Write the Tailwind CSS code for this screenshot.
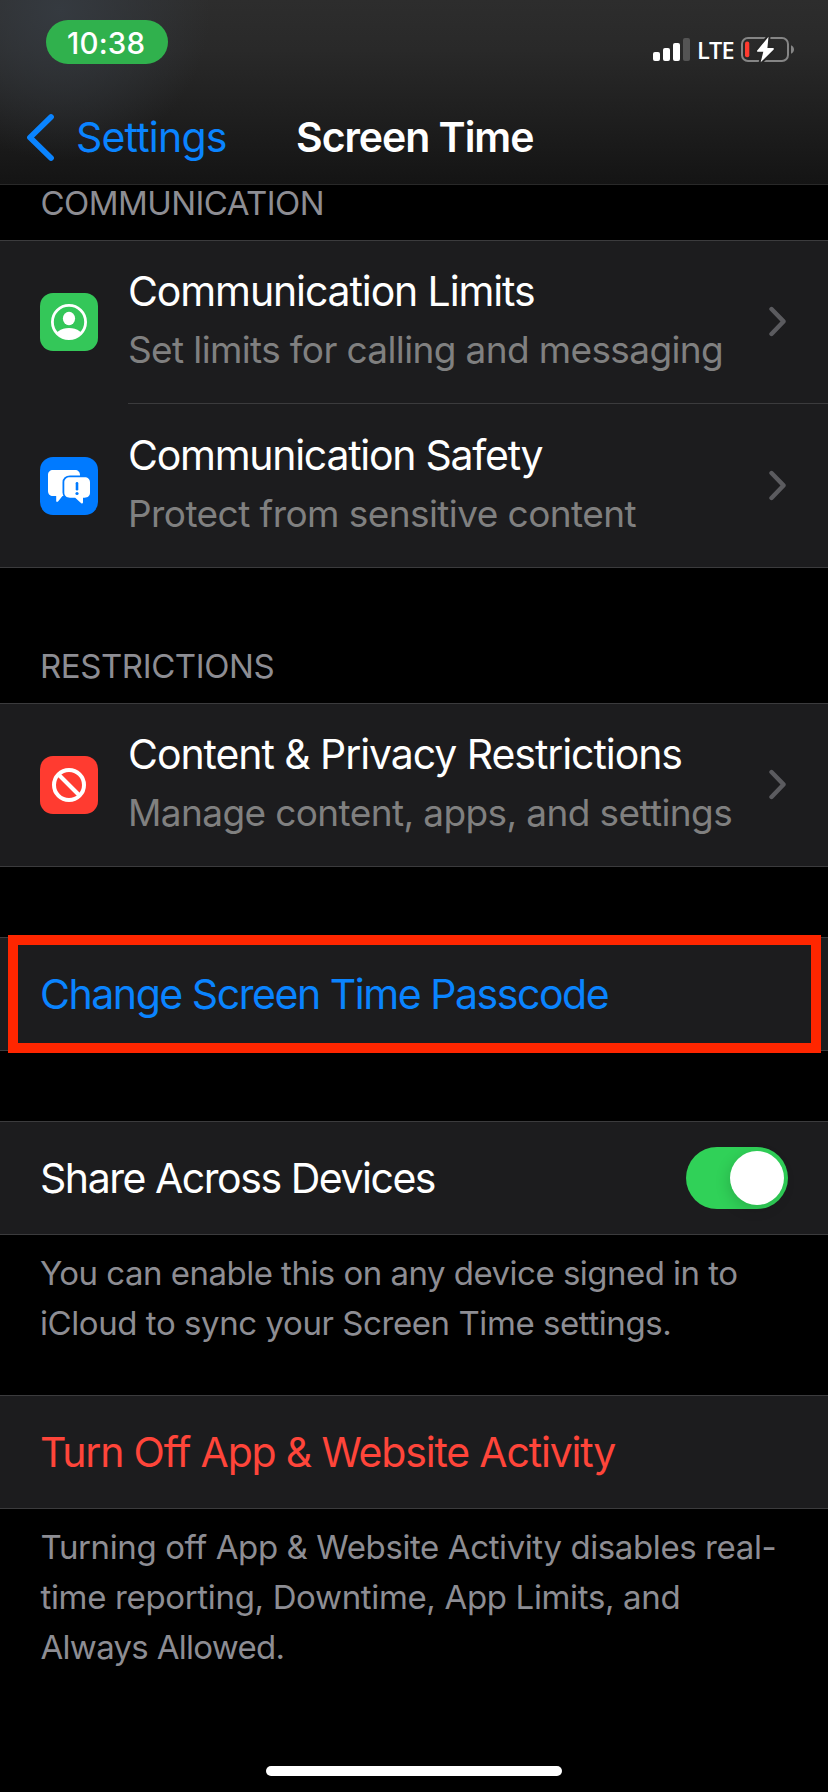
<!DOCTYPE html>
<html lang="en">
<head>
<meta charset="utf-8">
<title>Screen Time</title>
<script src="https://cdn.jsdelivr.net/npm/@tailwindcss/browser@4"></script>
</head>
<body class="bg-black">
<div class="relative flex h-[1792px] w-[828px] flex-col overflow-hidden bg-black font-['Inter',sans-serif] text-white whitespace-nowrap">

  <!-- Status bar and navigation bar -->
  <header class="h-[185px] shrink-0 border-b border-[#292929] bg-[radial-gradient(circle_at_60px_10px,#353a40_0px,#353a4000_150px),linear-gradient(to_bottom,#2d2d2d_0px,#292929_50px,#141414_184px)]">
    <div class="flex h-[84px] justify-between pt-5 pr-[34px] pl-[46px]">
      <div class="flex h-11 w-[122px] items-center rounded-full bg-[#30b14d] pl-[21px] text-[29.500px] leading-[44px] font-medium tracking-[0.2px]"><span class="mt-px">10:38</span></div>
      <div class="flex items-start pt-4">
        <svg class="mt-0.5 h-[23px] w-[37px]" viewBox="0 0 37 23" fill="#fff">
          <rect x="0" y="14" width="7" height="9" rx="2"/>
          <rect x="10" y="10" width="7" height="13" rx="2"/>
          <rect x="20" y="5" width="7" height="18" rx="2"/>
          <rect x="30" y="0" width="7" height="23" rx="2" fill="#545454"/>
        </svg>
        <span class="ml-[7px] w-[37px] font-['Open_Sans',sans-serif] text-[23.5px] leading-[29px] font-semibold tracking-[-0.8px]">LTE</span>
        <svg class="ml-[6px] h-[28px] w-[54px]" viewBox="740 36 54 28">
          <rect x="742" y="38" width="46" height="23" rx="6" fill="none" stroke="#858585" stroke-width="2"/>
          <path d="M791 45.2c2 .8 3 2.4 3 4.3s-1 3.500-3 4.300z" fill="#858585"/>
          <rect x="745" y="41.500" width="4.300" height="15.700" rx="2" fill="#ff3b30"/>
          <path d="M768.500 36.800 757 50.700q-.3.900.7 1h5.600l-2.600 10.600 13-12.900q.5-1-.6-1.300h-5.700z" fill="#fff" stroke="#272727" stroke-width="4" stroke-linejoin="round" paint-order="stroke"/>
        </svg>
      </div>
    </div>
    <div class="flex h-[100px] items-center pl-[26px] text-[41px] leading-[48px]">
      <svg class="mt-[5px] h-[50px] w-[30px]" viewBox="0 0 30 50" fill="none" stroke="#0a84ff" stroke-width="5.800" stroke-linecap="round" stroke-linejoin="round"><path d="M25 5 4 25.500 25 46"/></svg>
      <span class="mt-[6px] ml-5 w-[220px] tracking-[-0.8px] text-[#0a84ff]">Settings</span>
      <h1 class="mt-[6px] font-semibold tracking-[-1.03px]">Screen Time</h1>
    </div>
  </header>

  <h2 class="h-[55px] shrink-0 pt-[2px] pl-[40.500px] text-[33px] leading-8 tracking-[-0.57px] text-[#8d8d93]">COMMUNICATION</h2>

  <section class="shrink-0 border-y border-[#3b3b3d] bg-[#1c1c1e]">
    <div class="flex h-[162px] pl-10">
      <svg class="mt-[52px] size-[58px]" viewBox="0 0 58 58">
        <rect width="58" height="58" rx="13" fill="#34c759"/>
        <clipPath id="c"><circle cx="29" cy="29" r="17"/></clipPath>
        <circle cx="29" cy="29" r="16.600" fill="none" stroke="#fff" stroke-width="2.800"/>
        <ellipse cx="29" cy="25.500" rx="6.100" ry="6.700" fill="#fff"/>
        <ellipse cx="29" cy="46" rx="15" ry="11" fill="#fff" clip-path="url(#c)"/>
      </svg>
      <div class="ml-[30px] grow pt-[26px]">
        <div class="text-[41px] leading-[48px] tracking-[-1.12px]">Communication Limits</div>
        <div class="mt-[12px] text-[37px] leading-[46px] tracking-[-0.63px] text-[#808080]">Set limits for calling and messaging</div>
      </div>
      <svg class="mt-[64px] mr-[41.500px] h-[32px] w-[19px]" viewBox="0 0 19 32" fill="none" stroke="#5b5b5f" stroke-width="4.400" stroke-linecap="round" stroke-linejoin="round"><path d="M3.500 4 15.500 16.400 3.500 28.900"/></svg>
    </div>
    <div class="ml-32 h-px bg-[#3b3b3d]"></div>
    <div class="flex h-[163px] pl-10">
      <svg class="mt-[53px] size-[58px]" viewBox="0 0 58 58">
        <rect width="58" height="58" rx="13" fill="#007aff"/>
        <path d="M13 13h22c3 0 5 2 5 5v16c0 3-2 5-5 5H22.500l-4.500 5.500q-1.500 1-1.800-.6V39H13c-3 0-5-2-5-5V18c0-3 2-5 5-5z" fill="#fff"/>
        <path d="M30 20.300h14.500c3.500 0 5.500 2 5.500 5.200v10c0 3.200-2 5.200-5.500 5.200H43v4.800q-.4 1.600-1.800.7l-6-5.500H30c-3.500 0-5.700-2-5.700-5.200v-10c0-3.200 2.200-5.200 5.700-5.200z" fill="#fff" stroke="#007aff" stroke-width="3.600" paint-order="stroke"/>
        <path d="M37 26.300v6" stroke="#007aff" stroke-width="2.600" stroke-linecap="round"/>
        <circle cx="37" cy="36.500" r="1.600" fill="#007aff"/>
      </svg>
      <div class="ml-[30px] grow pt-[27px]">
        <div class="text-[41px] leading-[48px] tracking-[-1.27px]">Communication Safety</div>
        <div class="mt-[12px] text-[37px] leading-[46px] tracking-[-0.57px] text-[#808080]">Protect from sensitive content</div>
      </div>
      <svg class="mt-[65px] mr-[41.500px] h-[32px] w-[19px]" viewBox="0 0 19 32" fill="none" stroke="#5b5b5f" stroke-width="4.400" stroke-linecap="round" stroke-linejoin="round"><path d="M3.500 4 15.500 16.400 3.500 28.900"/></svg>
    </div>
  </section>

  <h2 class="h-[135px] shrink-0 pt-[82px] pl-[40px] text-[33px] leading-8 tracking-[-0.42px] text-[#8d8d93]">RESTRICTIONS</h2>

  <section class="shrink-0 border-y border-[#3b3b3d] bg-[#1c1c1e]">
    <div class="flex h-[162px] pl-10">
      <svg class="mt-[52px] size-[58px]" viewBox="0 0 58 58">
        <rect width="58" height="58" rx="13" fill="#ff3b30"/>
        <circle cx="29" cy="29" r="15" fill="none" stroke="#fff" stroke-width="4"/>
        <path d="M18.500 18.500 39.500 39.500" stroke="#fff" stroke-width="4"/>
      </svg>
      <div class="ml-[30px] grow pt-[26px]">
        <div class="text-[41px] leading-[48px] tracking-[-1.07px]">Content &amp; Privacy Restrictions</div>
        <div class="mt-[12px] text-[37px] leading-[46px] tracking-[-0.61px] text-[#808080]">Manage content, apps, and settings</div>
      </div>
      <svg class="mt-[64px] mr-[41.500px] h-[32px] w-[19px]" viewBox="0 0 19 32" fill="none" stroke="#5b5b5f" stroke-width="4.400" stroke-linecap="round" stroke-linejoin="round"><path d="M3.500 4 15.500 16.400 3.500 28.900"/></svg>
    </div>
  </section>

  <section class="relative mt-[70px] h-[114px] shrink-0 border-y border-[#3b3b3d] bg-[#1c1c1e] pl-10 text-[41px] leading-[112px] tracking-[-1.45px] text-[#0a84ff]">
    Change Screen Time Passcode
    <div class="absolute -top-[3px] left-2 h-[118px] w-[813px] border-[10px] border-[#ff2600]"></div>
  </section>

  <section class="mt-[70px] flex h-[114px] shrink-0 items-center justify-between border-y border-[#3b3b3d] bg-[#1c1c1e] pr-10 pl-10 text-[41px] leading-[112px] tracking-[-1.46px]">
    <span>Share Across Devices</span>
    <div class="flex h-[62px] w-[102px] items-center justify-end rounded-full bg-[#30d158] pr-1">
      <div class="size-[54px] rounded-full bg-white shadow-[-2px_4px_14px_rgba(0,0,0,0.15)]"></div>
    </div>
  </section>
  <p class="h-[160px] shrink-0 pt-[13px] pl-[40px] text-[33px] leading-[50px] text-[#8d8d93]"><span class="tracking-[-0.52px]">You can enable this on any device signed in to</span><br><span class="tracking-[-0.43px]">iCloud to sync your Screen Time settings.</span></p>

  <section class="h-[114px] shrink-0 border-y border-[#3b3b3d] bg-[#1c1c1e] pl-10 text-[41px] leading-[112px] tracking-[-1.18px] text-[#ff453a]">Turn Off App &amp; Website Activity</section>
  <p class="shrink-0 pt-[13px] pl-[40.500px] text-[33px] leading-[50px] text-[#8d8d93]"><span class="tracking-[-0.4px]">Turning off App &amp; Website Activity disables real-</span><br><span class="tracking-[-0.34px]">time reporting, Downtime, App Limits, and</span><br><span class="tracking-[-0.7px]">Always Allowed.</span></p>

  <!-- Home indicator -->
  <div class="mx-auto mt-auto mb-4 h-[10px] w-[296px] shrink-0 rounded-full bg-white"></div>
</div>
</body>
</html>
